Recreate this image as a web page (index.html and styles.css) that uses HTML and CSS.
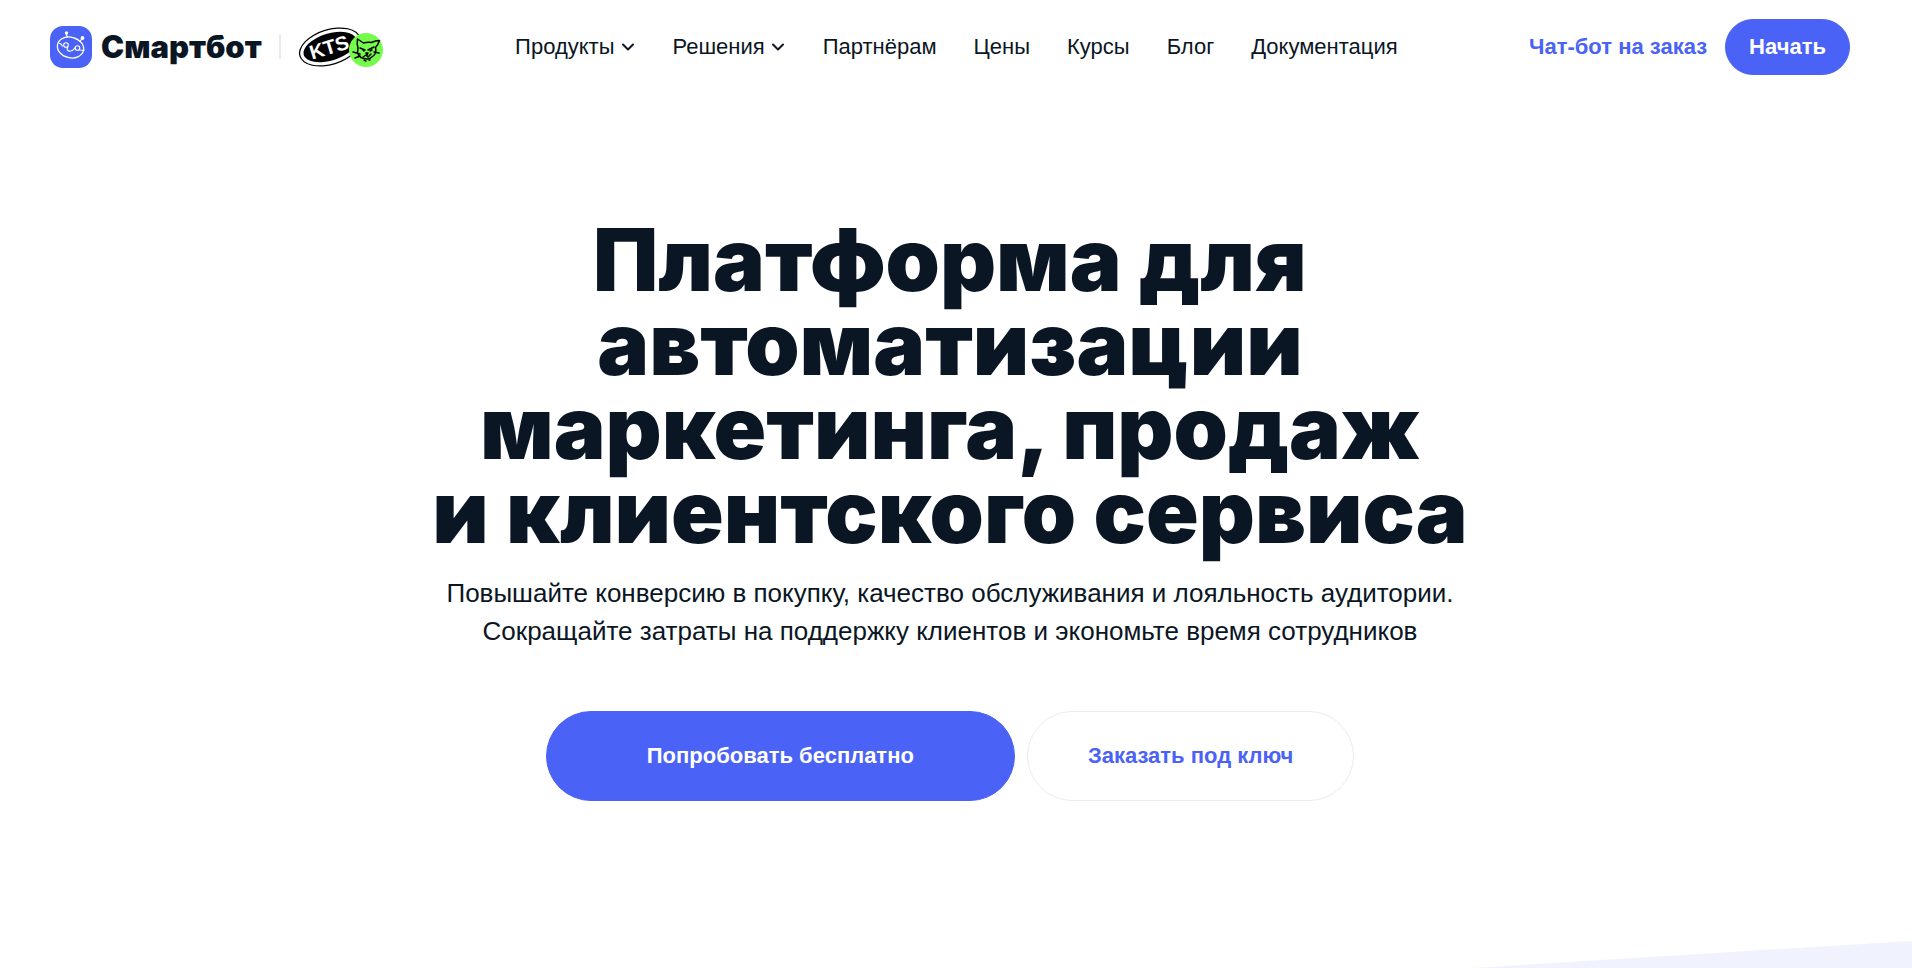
FILE: index.html
```html
<!DOCTYPE html>
<html lang="ru">
<head>
	<meta charset="UTF-8">
	<meta name="viewport" content="width=device-width, initial-scale=1">
	<title>Смартбот</title>
	<link rel="stylesheet" href="styles.css">
</head>
<body>

<header class="header">
	<div class="brand">
		<a href="#" class="logo">
			<svg class="logo-icon" viewBox="0 0 42 42" fill="none" stroke="#fff" aria-hidden="true">
				<rect width="42" height="42" rx="13" fill="#4a62f6" stroke="none"/>
				<ellipse cx="20.500" cy="21.500" rx="13.300" ry="10.300" transform="rotate(14 20.500 21.500)" stroke-width="1.300"/>
				<path d="M17 11.500 16.500 7.500M30 15.500l2-3" stroke-width="1.200"/>
				<circle cx="16.500" cy="7" r="1.700" fill="#fff" stroke="none"/>
				<circle cx="32.500" cy="12" r="1.900" fill="#fff" stroke="none"/>
				<circle cx="16" cy="19" r="2.300" stroke-width="1.100"/>
				<circle cx="27.500" cy="22" r="2.300" stroke-width="1.100"/>
				<path d="M9 17l2.500 1.500 1 2M18 20.500c-2 3 0 5 2.500 4.500 3 0 3-2 5-3.500M29.500 24l5 .500" stroke-width="1.100"/>
			</svg>
			<span class="logo-text">Смартбот</span>
		</a>
		<span class="divider"></span>
		<a href="#" class="kts" aria-label="KTS">
			<svg width="86" height="42" viewBox="0 0 86 42" aria-hidden="true">
				<g transform="rotate(-17 32 21)">
					<ellipse cx="32" cy="21" rx="32" ry="18" fill="#000"/>
					<ellipse cx="32" cy="21" rx="30.700" ry="16.700" fill="#fff"/>
					<ellipse cx="32" cy="21" rx="27.500" ry="13.500" fill="#000"/>
					<text class="kts-text" x="31" y="28" text-anchor="middle">KTS</text>
				</g>
				<circle cx="68" cy="24" r="17" fill="#75fb4c"/>
				<g fill="none" stroke="#000" stroke-width="1.500" stroke-linecap="round" stroke-linejoin="round">
					<path d="M60 22c-1-3-1-6-.500-9l6 4c3-1 6-1 8-.500 2-1 5-2 8-2-1 3-2 5-4 7 1 4 0 7-3 9-2 2-5 3-8 2-4 0-6-3-7-6z"/>
					<path d="M62 22l5 2M70 24l6-3M65 24l1 1M72 25l2-1M68 27l2 0-1 2zM65 31l3-2 2 2 3-3M62 28l-7-2M62 30l-5 2M76 26l5 1M66 34l2 1M71 34l1 0"/>
				</g>
			</svg>
		</a>
	</div>

	<nav class="nav">
		<a href="#">Продукты
			<svg class="arrow" viewBox="0 0 16 8" aria-hidden="true"><path d="M3 1.500l5 5 5-5"/></svg>
		</a>
		<a href="#">Решения
			<svg class="arrow" viewBox="0 0 16 8" aria-hidden="true"><path d="M3 1.500l5 5 5-5"/></svg>
		</a>
		<a href="#">Партнёрам</a>
		<a href="#">Цены</a>
		<a href="#">Курсы</a>
		<a href="#">Блог</a>
		<a href="#">Документация</a>
	</nav>

	<div class="actions">
		<a href="#" class="order-link">Чат-бот на заказ</a>
		<button type="button" class="btn btn-small">Начать</button>
	</div>
</header>

<main class="hero">
	<h1>Платформа для<br>автоматизации<br>маркетинга, продаж<br>и клиентского сервиса</h1>
	<p>Повышайте конверсию в покупку, качество обслуживания и лояльность аудитории.<br>Сокращайте затраты на поддержку клиентов и экономьте время сотрудников</p>
	<div class="buttons">
		<button type="button" class="btn btn-main">Попробовать бесплатно</button>
		<button type="button" class="btn btn-outline">Заказать под ключ</button>
	</div>
</main>

<div class="slope"></div>

</body>
</html>
```
FILE: styles.css
```css
*
{
    box-sizing: border-box;
    margin: 0;
    padding: 0;
}
body
{
    display: flex;
    flex-direction: column;
    min-height: 100vh;

    font-family: "Liberation Sans", Arial, sans-serif;
    color: #0a1624;
    background: #fff;
}
a
{
    text-decoration: none;
    color: inherit;
}

/* header */
.header
{
    display: flex;
    align-items: center;
    justify-content: space-between;
    padding: 19px 62px 0 50px;
}
.brand
{
    display: flex;
    align-items: center;
}
.logo
{
    display: flex;
    align-items: center;
    gap: 9px;
}
.logo-icon
{
    width: 42px;
    height: 42px;
}
.logo-text
{
    font-family: Inter, "Liberation Sans", sans-serif;
    font-size: 31px;
    font-weight: 900;
    line-height: 42px;
}
.divider
{
    width: 2px;
    height: 24px;
    margin: 0 17px;
    background: #e9e9e9;
}
.kts svg
{
    display: block;
}
.kts-text
{
    font-size: 20px;
    font-weight: bold;
    fill: #fff;
}
.nav
{
    display: flex;
    align-items: center;
    gap: 37px;

    font-size: 22px;
    line-height: 28px;
}
.nav a
{
    display: flex;
    align-items: center;
    gap: 5px;
}
.arrow
{
    width: 16px;
    height: 8px;

    fill: none;
    stroke: #0a1624;
    stroke-width: 2;
    stroke-linecap: round;
    stroke-linejoin: round;
}
.actions
{
    display: flex;
    align-items: center;
    gap: 18px;
}
.order-link
{
    font-size: 22px;
    font-weight: bold;
    color: #4a62f6;
}

/* buttons */
.btn
{
    font-family: inherit;
    font-size: 22px;
    font-weight: bold;
    cursor: pointer;
    color: #fff;
    border: 1px solid #4a62f6;
    border-radius: 45px;
    background: #4a62f6;
}
.btn-small
{
    height: 56px;
    padding: 0 23px;
}
.btn-main
{
    height: 90px;
    padding: 0 100px;
}
.btn-outline
{
    height: 90px;
    padding: 0 60px;

    color: #4a62f6;
    border-color: #ebebeb;
    background: #fff;
}

/* hero */
.hero
{
    flex: 1;
    padding: 143px 62px 0 50px;
    text-align: center;
}
.hero h1
{
    font-family: Inter, "Liberation Sans", sans-serif;
    font-size: 87px;
    font-weight: 900;
    line-height: 84px;
}
.hero p
{
    margin-top: 20px;
    font-size: 26px;
    line-height: 38px;
}
.buttons
{
    display: flex;
    justify-content: center;
    gap: 12px;
    margin-top: 61px;
}
.slope
{
    align-self: flex-end;
    width: 23%;
    height: 27px;
    background: #f0f2fd;
    clip-path: polygon(0 100%, 100% 0, 100% 100%);
}
```
